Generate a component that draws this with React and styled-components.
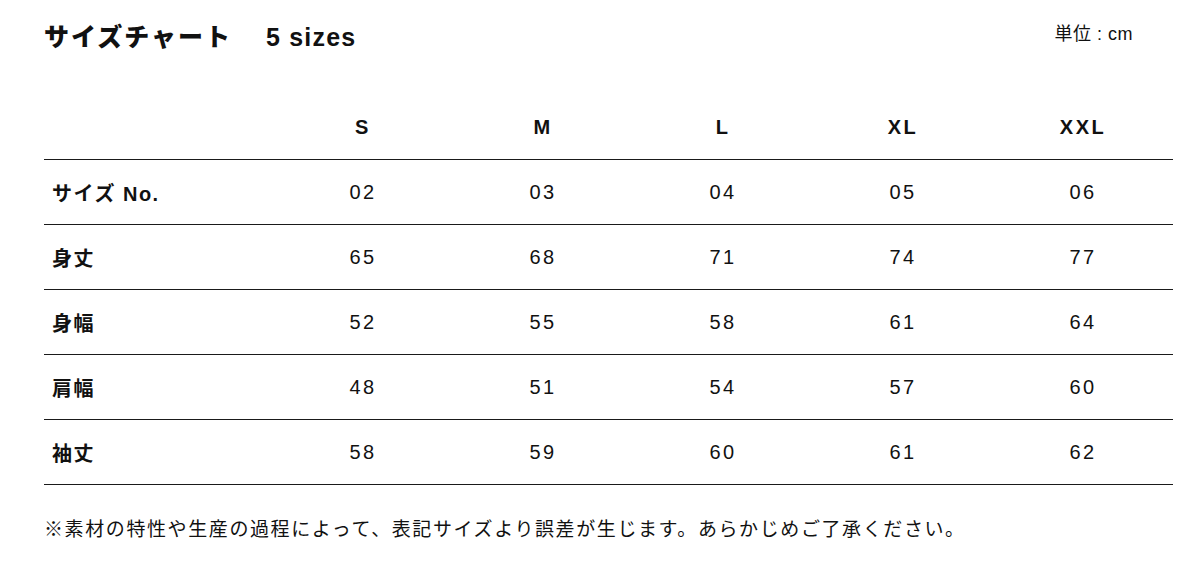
import React from "react";
import styled, { createGlobalStyle } from "styled-components";

const sizes = ["S", "M", "L", "XL", "XXL"];

const rows = [
  { label: "サイズ No.", values: ["02", "03", "04", "05", "06"] },
  { label: "身丈", values: ["65", "68", "71", "74", "77"] },
  { label: "身幅", values: ["52", "55", "58", "61", "64"] },
  { label: "肩幅", values: ["48", "51", "54", "57", "60"] },
  { label: "袖丈", values: ["58", "59", "60", "61", "62"] },
];

const App = () => {
  return (
    <>
      <GlobalStyle />
      <Page>
        <Header>
          <Title>
            サイズチャート<Count>5 sizes</Count>
          </Title>
          <Unit>単位 : cm</Unit>
        </Header>

        <Table>
          <Row>
            <LabelCell />
            {sizes.map((s) => (
              <HeadCell key={s}>{s}</HeadCell>
            ))}
          </Row>
          {rows.map((row) => (
            <Row key={row.label}>
              <LabelCell>{row.label}</LabelCell>
              {row.values.map((v, i) => (
                <ValueCell key={i}>{v}</ValueCell>
              ))}
            </Row>
          ))}
        </Table>

        <Note>
          ※素材の特性や生産の過程によって、表記サイズより誤差が生じます。あらかじめご了承ください。
        </Note>
      </Page>
    </>
  );
};

const GlobalStyle = createGlobalStyle`
  body {
    margin: 0;
    background: #fff;
    color: #111;
    font-family: "Liberation Sans", "Noto Sans CJK JP", sans-serif;
  }
`;

const Page = styled.div`
  width: 1200px;
  height: 563px;
  padding: 0 27px 0 44px;
  box-sizing: border-box;
`;

const Header = styled.header`
  height: 95px;
  display: flex;
  justify-content: space-between;
  align-items: flex-start;
  padding-right: 40px;
`;

const Title = styled.h1`
  margin: 21px 0 0;
  font-size: 25px;
  line-height: 32px;
  font-weight: 900;
  letter-spacing: 2px;
`;

const Count = styled.span`
  margin-left: 34px;
  font-weight: 700;
  letter-spacing: 1.2px;
`;

const Unit = styled.div`
  margin-top: 22px;
  font-size: 18px;
  line-height: 24px;
  letter-spacing: 0.5px;
`;

const Table = styled.div`
  display: flex;
  flex-direction: column;
`;

const Row = styled.div`
  display: grid;
  grid-template-columns: 229px repeat(5, 180px);
  height: 65px;
  align-items: center;
  border-bottom: 1.5px solid #1a1a1a;
  box-sizing: border-box;
`;

const LabelCell = styled.div`
  padding-left: 8px;
  font-size: 20px;
  font-weight: 700;
  letter-spacing: 1.5px;
`;

const HeadCell = styled.div`
  text-align: center;
  font-size: 20px;
  font-weight: 700;
  letter-spacing: 2.5px;
`;

const ValueCell = styled.div`
  text-align: center;
  font-size: 20px;
  letter-spacing: 2.5px;
`;

const Note = styled.p`
  margin: 33px 0 0;
  font-size: 19px;
  line-height: 24px;
  letter-spacing: 1.6px;
`;

export default App;
